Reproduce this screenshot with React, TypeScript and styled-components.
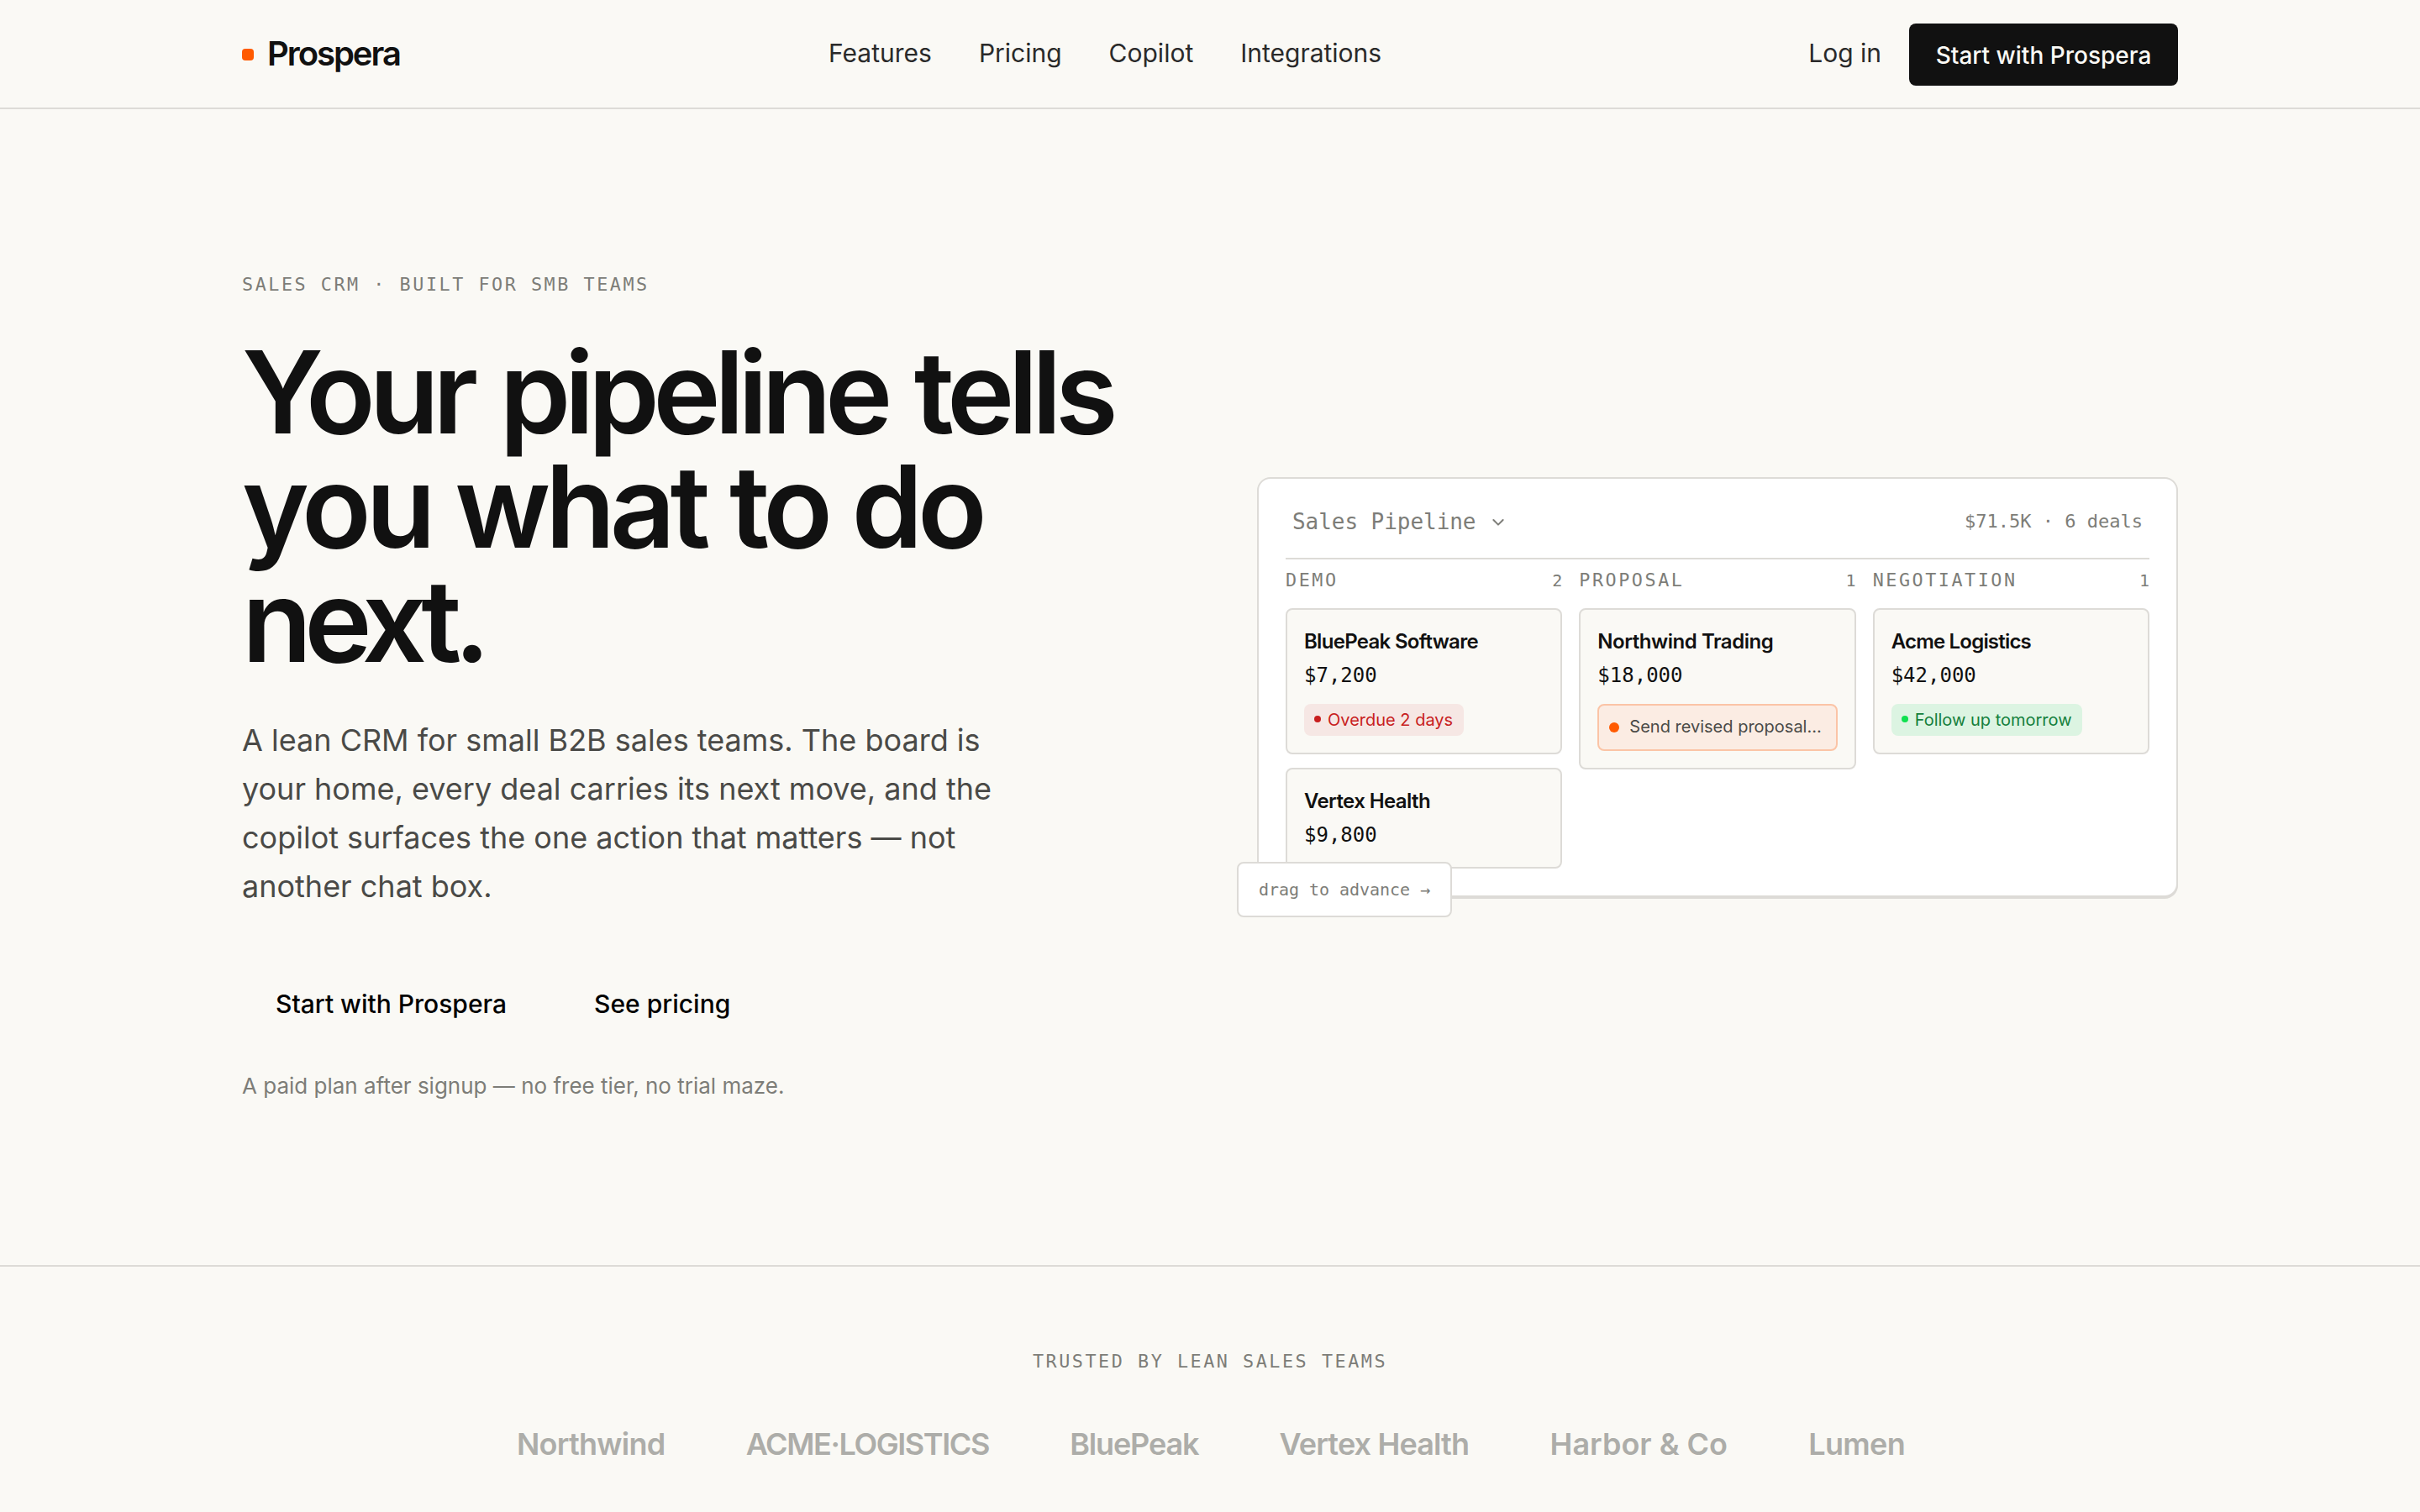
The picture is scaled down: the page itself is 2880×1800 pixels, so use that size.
import React from 'react';
import styled, { createGlobalStyle } from 'styled-components';

const colors = {
  paper: '#faf9f5',
  surface: '#ffffff',
  ink: '#111111',
  body: '#4a4a47',
  muted: '#7d7d78',
  faint: '#adada9',
  line: '#dddbd7',
  accent: '#ff5a00',
};

const sans = `Inter, 'Liberation Sans', sans-serif`;
const mono = `'DejaVu Sans Mono', 'Liberation Mono', monospace`;

const GlobalStyle = createGlobalStyle`
  * {
    box-sizing: border-box;
  }
  body {
    margin: 0;
    background: ${colors.paper};
    color: ${colors.ink};
    font-family: ${sans};
  }
  h1, p {
    margin: 0;
  }
`;

const Page = styled.div`
  min-height: 1800px;
  overflow: hidden;
`;

const Header = styled.header`
  padding: 28px 288px 26px;
  border-bottom: 2px solid ${colors.line};
  display: flex;
  align-items: center;
  justify-content: space-between;
`;

const Brand = styled.div`
  width: 190px;
  display: flex;
  align-items: center;
  gap: 16px;
`;

const BrandMark = styled.span`
  width: 14px;
  height: 14px;
  border-radius: 4px;
  background: ${colors.accent};
`;

const BrandName = styled.span`
  font-size: 40px;
  font-weight: 600;
  line-height: 60px;
  letter-spacing: -2.05px;
  margin-bottom: 2px;
`;

const Nav = styled.nav`
  display: flex;
  gap: 56px;
  margin-bottom: 4px;
`;

const NavLink = styled.a`
  font-size: 30px;
  line-height: 45px;
  color: #2a2a2a;
`;

const HeaderActions = styled.div`
  display: flex;
  align-items: center;
  gap: 33px;
  ${NavLink} {
    margin-bottom: 4px;
  }
`;

const HeaderButton = styled.button`
  width: 320px;
  height: 74px;
  padding: 2px 0 0;
  border: 0;
  border-radius: 8px;
  background: ${colors.ink};
  color: ${colors.paper};
  font: 500 28px ${sans};
`;

const Hero = styled.section`
  height: 1376px;
  padding: 0 288px;
  display: grid;
  grid-template-columns: 1112px 1096px;
  column-gap: 96px;
  align-items: center;
`;

const HeroCopy = styled.div`
  height: 992px;
  padding-top: 1px;
`;

const Eyebrow = styled.p`
  font-family: ${mono};
  font-size: 21.76px;
  line-height: 32px;
  letter-spacing: 2.54px;
  text-transform: uppercase;
  color: ${colors.muted};
`;

const Headline = styled.h1`
  margin-top: 44px;
  font-size: 136px;
  font-weight: 600;
  line-height: 136px;
`;

const HeadlineRow = styled.span<{ $track: number; $wordGap?: number }>`
  display: block;
  white-space: nowrap;
  letter-spacing: ${({ $track }) => $track}px;
  word-spacing: ${({ $wordGap = 0 }) => $wordGap}px;
`;

const Lead = styled.p`
  width: 920px;
  margin-top: 45px;
  font-size: 36px;
  line-height: 58px;
  color: ${colors.body};
`;

const HeroActions = styled.div`
  display: flex;
  gap: 24px;
  margin-top: 68px;
`;

const GhostButton = styled.button`
  height: 86px;
  padding: 0 40px;
  border: 0;
  background: transparent;
  color: #000;
  font: 500 30px ${sans};
`;

const Note = styled.p`
  margin-top: 34px;
  font-size: 26px;
  line-height: 41px;
  color: ${colors.muted};
`;

const Panel = styled.div`
  position: relative;
  height: 500px;
  padding: 32px;
  border: 2px solid ${colors.line};
  border-radius: 16px;
  background: ${colors.surface};
  box-shadow: 0 2px 0 ${colors.line};
`;

const PanelHeader = styled.div`
  height: 64px;
  padding: 0 8px 24px;
  border-bottom: 2px solid ${colors.line};
  display: flex;
  align-items: center;
  justify-content: space-between;
  font-family: ${mono};
  color: ${colors.muted};
`;

const PanelTitle = styled.div`
  display: flex;
  align-items: center;
  gap: 15px;
  font-size: 26px;
  line-height: 38px;
  letter-spacing: -0.05px;
`;

const PanelSummary = styled.div`
  font-size: 22px;
  line-height: 36px;
`;

const Board = styled.div`
  display: grid;
  grid-template-columns: repeat(3, 1fr);
  gap: 20px;
  padding-top: 8px;
`;

const StageHeader = styled.div`
  height: 34px;
  margin-bottom: 16px;
  display: flex;
  align-items: center;
  justify-content: space-between;
`;

const StageCount = styled.span`
  font-family: ${mono};
  font-size: 20px;
  color: ${colors.muted};
`;

const StageCards = styled.div`
  display: flex;
  flex-direction: column;
  gap: 16px;
`;

const Card = styled.div`
  padding: 20px;
  border: 2px solid ${colors.line};
  border-radius: 8px;
  background: ${colors.paper};
`;

const CardTitle = styled.div<{ $track: number }>`
  font-size: 24px;
  font-weight: 600;
  line-height: 36px;
  letter-spacing: ${({ $track }) => $track}px;
`;

const CardAmount = styled.div`
  margin-top: 4px;
  font-family: ${mono};
  font-size: 24px;
  line-height: 36px;
`;

const tones = {
  overdue: { background: '#f6e7e4', text: '#c81e1e', dot: '#c81e1e' },
  upcoming: { background: '#dcf4e2', text: '#15803d', dot: '#0fe04f' },
};

const Chip = styled.div<{ $tone: keyof typeof tones }>`
  width: max-content;
  height: 38px;
  margin-top: 16px;
  padding: 0 12.5px 0 12px;
  border-radius: 8px;
  display: flex;
  align-items: center;
  gap: 8px;
  font-size: 20px;
  background: ${({ $tone }) => tones[$tone].background};
  color: ${({ $tone }) => tones[$tone].text};
  &::before {
    content: '';
    width: 8px;
    height: 8px;
    margin-bottom: 2px;
    border-radius: 50%;
    background: ${({ $tone }) => tones[$tone].dot};
  }
`;

const Suggestion = styled.div`
  height: 56px;
  margin-top: 16px;
  padding: 0 12px 1px;
  border: 2px solid #fbc4a6;
  border-radius: 8px;
  display: flex;
  align-items: center;
  gap: 12px;
  font-size: 20px;
  line-height: 27px;
  white-space: nowrap;
  background: #fbece3;
  color: ${colors.body};
  &::before {
    content: '';
    width: 12px;
    height: 12px;
    border-radius: 50%;
    background: ${colors.accent};
  }
`;

// Hangs off the panel's bottom left corner
const DragHint = styled.div`
  position: absolute;
  left: -26px;
  bottom: -26px;
  height: 66px;
  width: 256px;
  padding: 0 24px;
  border: 2px solid ${colors.line};
  border-radius: 8px;
  background: ${colors.surface};
  font-family: ${mono};
  font-size: 20px;
  line-height: 62px;
  letter-spacing: -0.04px;
  white-space: nowrap;
  color: ${colors.muted};
`;

const Trusted = styled.section`
  padding: 97px 288px 53px;
  border-top: 2px solid ${colors.line};
  display: flex;
  flex-direction: column;
  align-items: center;
`;

const LogoRow = styled.div`
  display: flex;
  gap: 96.3px;
  margin-top: 55px;
  padding-left: 2px;
`;

const LogoName = styled.span<{ $track: number }>`
  font-size: 36px;
  font-weight: 600;
  line-height: 54px;
  letter-spacing: ${({ $track }) => $track}px;
  color: ${colors.faint};
`;

type Deal = {
  name: string;
  amount: string;
  track: number;
  chip?: { tone: keyof typeof tones; text: string };
  suggestion?: string;
};

type Stage = {
  name: string;
  count: number;
  deals: Array<Deal>;
};

const links = ['Features', 'Pricing', 'Copilot', 'Integrations'];

const stages: Array<Stage> = [
  {
    name: 'Demo',
    count: 2,
    deals: [
      { name: 'BluePeak Software', amount: '$7,200', track: -0.7, chip: { tone: 'overdue', text: 'Overdue 2 days' } },
      { name: 'Vertex Health', amount: '$9,800', track: -0.6 },
    ],
  },
  {
    name: 'Proposal',
    count: 1,
    deals: [{ name: 'Northwind Trading', amount: '$18,000', track: -0.45, suggestion: 'Send revised proposal...' }],
  },
  {
    name: 'Negotiation',
    count: 1,
    deals: [{ name: 'Acme Logistics', amount: '$42,000', track: -0.8, chip: { tone: 'upcoming', text: 'Follow up tomorrow' } }],
  },
];

const customers = [
  { name: 'Northwind', track: -0.75 },
  { name: 'ACME·LOGISTICS', track: -1.4 },
  { name: 'BluePeak', track: -1.15 },
  { name: 'Vertex Health', track: -0.85 },
  { name: 'Harbor & Co', track: 0 },
  { name: 'Lumen', track: -0.7 },
];

const Chevron = () => (
  <svg width="24" height="24" viewBox="0 0 24 24" fill="none" stroke="currentColor" strokeWidth="2" strokeLinecap="round" strokeLinejoin="round">
    <path d="M6.4 10l5.6 5.6 5.6-5.6" />
  </svg>
);

const DealCard = ({ deal }: { deal: Deal }) => (
  <Card>
    <CardTitle $track={deal.track}>{deal.name}</CardTitle>
    <CardAmount>{deal.amount}</CardAmount>
    {deal.chip && <Chip $tone={deal.chip.tone}>{deal.chip.text}</Chip>}
    {deal.suggestion && <Suggestion>{deal.suggestion}</Suggestion>}
  </Card>
);

const PipelinePanel = () => (
  <Panel>
    <PanelHeader>
      <PanelTitle>Sales Pipeline <Chevron /></PanelTitle>
      <PanelSummary>$71.5K · 6 deals</PanelSummary>
    </PanelHeader>
    <Board>
      {stages.map((stage) => (
        <div key={stage.name}>
          <StageHeader>
            <Eyebrow as="span">{stage.name}</Eyebrow>
            <StageCount>{stage.count}</StageCount>
          </StageHeader>
          <StageCards>
            {stage.deals.map((deal) => <DealCard key={deal.name} deal={deal} />)}
          </StageCards>
        </div>
      ))}
    </Board>
    <DragHint>drag to advance →</DragHint>
  </Panel>
);

const App = () => {
  return <Page>
    <GlobalStyle />
    <Header>
      <Brand>
        <BrandMark />
        <BrandName>Prospera</BrandName>
      </Brand>
      <Nav>
        {links.map((link) => <NavLink key={link}>{link}</NavLink>)}
      </Nav>
      <HeaderActions>
        <NavLink>Log in</NavLink>
        <HeaderButton>Start with Prospera</HeaderButton>
      </HeaderActions>
    </Header>
    <Hero>
      <HeroCopy>
        <Eyebrow>Sales CRM · Built for SMB teams</Eyebrow>
        <Headline>
          <HeadlineRow $track={-7.5} $wordGap={6}>Your pipeline tells</HeadlineRow>
          <HeadlineRow $track={-6.4} $wordGap={1}>you what to do</HeadlineRow>
          <HeadlineRow $track={-9}>next.</HeadlineRow>
        </Headline>
        <Lead>
          A lean CRM for small B2B sales teams. The board is your home, every deal carries its next
          move, and the copilot surfaces the one action that matters — not another chat box.
        </Lead>
        <HeroActions>
          <GhostButton>Start with Prospera</GhostButton>
          <GhostButton>See pricing</GhostButton>
        </HeroActions>
        <Note>A paid plan after signup — no free tier, no trial maze.</Note>
      </HeroCopy>
      <PipelinePanel />
    </Hero>
    <Trusted>
      <Eyebrow>Trusted by lean sales teams</Eyebrow>
      <LogoRow>
        {customers.map((customer) => (
          <LogoName key={customer.name} $track={customer.track}>{customer.name}</LogoName>
        ))}
      </LogoRow>
    </Trusted>
  </Page>;
};

export default App;
